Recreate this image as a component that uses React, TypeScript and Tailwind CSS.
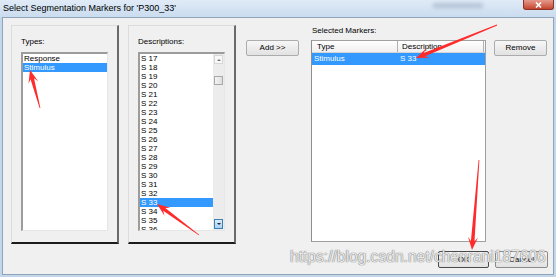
import React from "react";

const types = ["Response", "Stimulus"];
const descriptions = Array.from({ length: 20 }, (_, i) => `S ${17 + i}`);

// red annotation arrows: [tailX, tailY, tipX, tipY]
const arrows: [number, number, number, number][] = [
  [40, 108, 30, 70],
  [497, 25, 416, 58],
  [199, 235, 157, 204],
  [479, 160, 472, 250],
];

function arrowPoints([tx, ty, px, py]: [number, number, number, number]) {
  const dx = px - tx;
  const dy = py - ty;
  const len = Math.hypot(dx, dy);
  const ux = dx / len;
  const uy = dy / len;
  const nx = -uy;
  const ny = ux;
  const at = (d: number, w: number) => [px - ux * d + nx * w, py - uy * d + ny * w];
  const pts = [
    [tx + nx * 0.4, ty + ny * 0.4],
    at(9, 1.8),
    at(13, 5),
    [px, py],
    at(13, -5),
    at(9, -1.8),
    [tx - nx * 0.4, ty - ny * 0.4],
  ];
  return pts.map((p) => p.map((v) => v.toFixed(1)).join(",")).join(" ");
}

function Button({ label, className = "" }: { label: string; className?: string }) {
  return (
    <div
      className={`flex h-[16px] items-center justify-center rounded-[2px] border bg-gradient-to-b from-[#f7f7f7] to-[#e2e2e2] text-[8px] leading-none ${className}`}
    >
      {label}
    </div>
  );
}

function ListPanel({ label, children }: { label: string; children: React.ReactNode }) {
  return (
    <div className="flex h-[219px] w-[108px] flex-col border-l border-t border-[#dcdcdc] border-r-2 border-r-[#6a6a6a] border-b-2 border-b-[#1c1c1c] pl-[9px]">
      <div className="mt-[11px] h-[10px] text-[8px] leading-[10px]">{label}</div>
      <div className="mt-[5px] flex h-[179px] w-[87px] overflow-hidden border-l-2 border-t-2 border-[#9c9c9c] border-r border-b border-r-[#e6e6e6] border-b-[#e6e6e6] bg-white">
        {children}
      </div>
    </div>
  );
}

export default function App() {
  return (
    <div className="relative h-[277px] w-[556px] overflow-hidden bg-[#c3d7ec] font-['Liberation_Sans',Arial,sans-serif] text-black">
      {/* title bar */}
      <div className="flex h-[17px] items-start justify-between bg-gradient-to-b from-[#e0ebf7] to-[#cadcef] pl-[3px]">
        <span className="mt-[3px] text-[9px] leading-[11px]">Select Segmentation Markers for 'P300_33'</span>
        <div className="flex items-start">
          <div className="mr-[40px] mt-[3px] h-[5px] w-[50px] bg-[#9aabc0] opacity-60 blur-[2px]" />
          <div className="mr-[2px] flex h-[10px] w-[31px] items-center justify-center rounded-b-[3px] border border-t-0 border-[#8a3326] bg-gradient-to-b from-[#e49a8c] to-[#c4432d]">
            <svg width="7" height="6" viewBox="0 0 7 6">
              <path d="M1 0.5 L6 5.5 M6 0.5 L1 5.5" stroke="white" strokeWidth="1.6" />
            </svg>
          </div>
        </div>
      </div>

      {/* client area */}
      <div className="mx-[2px] flex h-[258px] flex-col border border-[#8fa3b9] bg-[#f0f0f0]">
        <div className="flex items-start pl-[8px] pt-[7px]">
          <ListPanel label="Types:">
            <div className="flex flex-1 flex-col">
              {types.map((t) => (
                <div
                  key={t}
                  className={`h-[9px] pl-[1px] text-[8px] leading-[9px] ${t === "Stimulus" ? "bg-[#3399ff] text-white" : ""}`}
                >
                  {t}
                </div>
              ))}
            </div>
          </ListPanel>

          <div className="ml-[9px]">
            <ListPanel label="Descriptions:">
              <div className="flex flex-1 flex-col">
                {descriptions.map((d) => (
                  <div
                    key={d}
                    className={`h-[9px] shrink-0 pl-[1px] text-[8px] leading-[9px] ${d === "S 33" ? "bg-[#3399ff] text-white" : ""}`}
                  >
                    {d}
                  </div>
                ))}
              </div>
              <div className="flex w-[11px] shrink-0 flex-col bg-[#ececec] px-[1px] pt-[1px]">
                <div className="flex h-[9px] items-center justify-center border border-[#d6d6d6] bg-[#f8f8f8]">
                  <div className="h-0 w-0 border-x-[2px] border-b-[2px] border-x-transparent border-b-[#777]" />
                </div>
                <div className="mt-[12px] h-[9px] border border-[#a8a8a8] bg-gradient-to-r from-[#f4f4f4] to-[#dedede]" />
                <div className="flex-1" />
                <div className="mb-[1px] flex h-[10px] items-center justify-center border border-[#3c7fb1] bg-gradient-to-b from-[#d9ecfb] to-[#a9d1f2]">
                  <div className="h-0 w-0 border-x-[2px] border-t-[2px] border-x-transparent border-t-[#223]" />
                </div>
              </div>
            </ListPanel>
          </div>

          <Button label="Add >>" className="ml-[10px] mt-[15px] w-[53px] border-[#acacac]" />

          <div className="ml-[12px] flex flex-col">
            <div className="h-[15px] pl-[1px] text-[8px] leading-[11px]">Selected Markers:</div>
            <div className="flex h-[202px] w-[175px] flex-col border border-[#a0a0a0] border-l-[#8e8e8e] bg-white">
              <div className="flex h-[12px] border-b border-[#d5d5d5] bg-gradient-to-b from-[#ffffff] to-[#efefef] text-[8px] leading-[12px]">
                <div className="w-[86px] border-r border-[#b0b0b0] pl-[5px]">Type</div>
                <div className="w-[86px] border-r border-[#b0b0b0] pl-[4px]">Description</div>
              </div>
              <div className="flex h-[12px] bg-[#3399ff] text-[8px] leading-[12px] text-white">
                <div className="w-[87px] pl-[2px]">Stimulus</div>
                <div className="pl-[1px]">S 33</div>
              </div>
            </div>
          </div>

          <Button label="Remove" className="ml-[8px] mt-[15px] w-[53px] border-[#acacac]" />
        </div>

        <div className="mt-[7px] flex justify-end pr-[5px]">
          <Button label="OK" className="h-[17px] w-[51px] border-[#4a4a4a]" />
          <Button label="Cancel" className="ml-[6px] h-[17px] w-[53px] border-[#8a8a8a]" />
        </div>
      </div>

      {/* blog watermark */}
      <div className="pointer-events-none absolute left-[290px] top-[248px] text-[15.6px] leading-[18px] text-white/85 [text-shadow:0_0_1px_#6b6b6b,0_0_1px_#6b6b6b]">
        https://blog.csdn.net/chenrani187606
      </div>

      {/* red arrows */}
      <svg className="pointer-events-none absolute left-0 top-0" width="556" height="277">
        {arrows.map((a, i) => (
          <polygon key={i} points={arrowPoints(a)} fill="#ff2b2b" />
        ))}
      </svg>
    </div>
  );
}
